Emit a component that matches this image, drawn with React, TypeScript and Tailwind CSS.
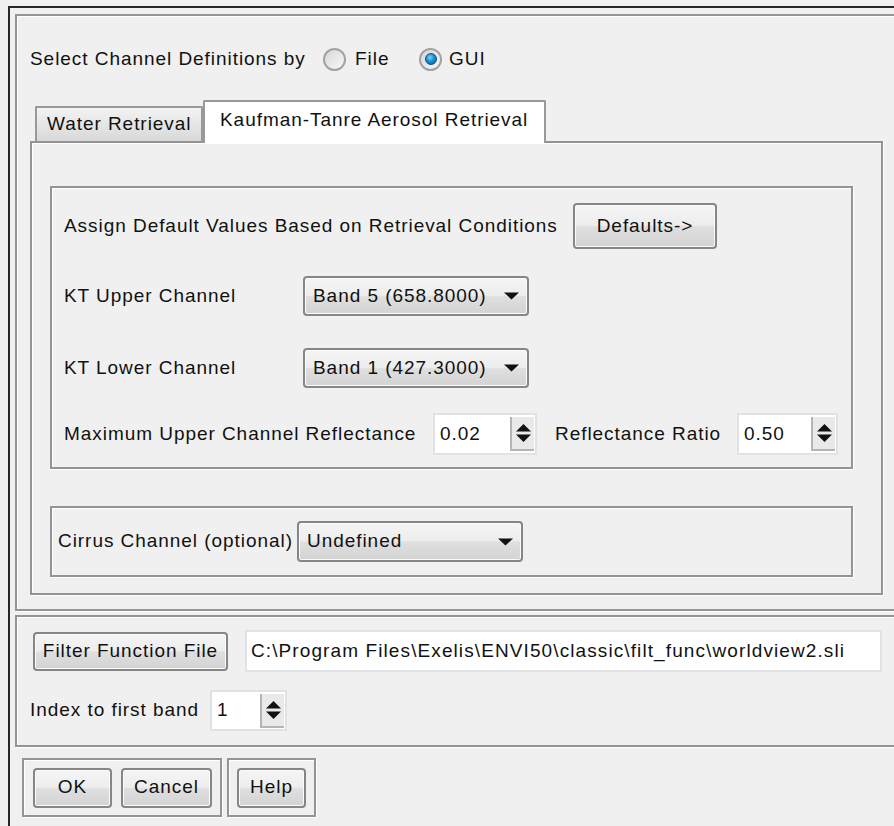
import React from "react";

const BTN =
  "flex shrink-0 items-center justify-center rounded-[4px] border-2 border-[#868686] bg-[linear-gradient(180deg,#f5f5f5_0%,#ededed_48%,#dfdfdf_52%,#d3d3d3_100%)] shadow-[inset_0_0_0_1px_#fbfbfb]";

const COMBO =
  "flex shrink-0 items-center justify-between rounded-[4px] border-2 border-[#868686] bg-[linear-gradient(180deg,#f5f5f5_0%,#ededed_48%,#dfdfdf_52%,#d3d3d3_100%)] shadow-[inset_0_0_0_1px_#fbfbfb] pl-[8px] pr-[8px]";

const FRAME = "border-2 border-[#949494] shadow-[inset_1px_1px_0_#ffffff,1px_1px_0_#ffffff]";

function DropArrow() {
  return (
    <svg width="15" height="8" viewBox="0 0 15 8" className="shrink-0">
      <path d="M0 0.5H15L7.5 7.5Z" fill="#111" />
    </svg>
  );
}

function SpinArrows() {
  return (
    <svg width="17" height="22" viewBox="0 0 17 22">
      <path d="M1 9.5L8.5 2L16 9.5Z" fill="#111" />
      <path d="M1 12.5H16L8.5 20Z" fill="#111" />
    </svg>
  );
}

function Combo({ value, className }: { value: string; className: string }) {
  return (
    <div className={`${COMBO} ${className}`}>
      <span className="whitespace-nowrap">{value}</span>
      <DropArrow />
    </div>
  );
}

function Spin({ value, className }: { value: string; className: string }) {
  return (
    <div className={`flex shrink-0 items-center justify-between border-2 border-[#dfe2e6] bg-white pl-[5px] ${className}`}>
      <span className="whitespace-nowrap">{value}</span>
      <div className="mr-[1px] flex h-[34px] w-[24px] items-center justify-center border-l-2 border-b-2 border-[#b4b4b4] bg-[#e9e9e9]">
        <SpinArrows />
      </div>
    </div>
  );
}

function Radio({ checked }: { checked?: boolean }) {
  return (
    <span className="flex h-[23px] w-[23px] shrink-0 items-center justify-center rounded-full border-2 border-[#a2a2a2] bg-[linear-gradient(135deg,#d6d6d6,#f9f9f9)]">
      {checked && (
        <span className="h-[12px] w-[12px] rounded-full border border-[#0b4f86] bg-[radial-gradient(circle_at_40%_35%,#7fd3f7_0%,#1c8fd0_45%,#0a5a9c_100%)]" />
      )}
    </span>
  );
}

export default function App() {
  return (
    <div className="h-[826px] w-[894px] overflow-hidden bg-[#f0f0f0] font-['Liberation_Sans',Arial,sans-serif] text-[19px] leading-normal tracking-[0.95px] text-[#111]">
      <div className="ml-[8px] mt-[6px] h-[820px] w-[900px] border-l-2 border-t-2 border-[#262626] pl-[5px] pt-[6px]">
        {/* channel definitions and tabbed settings */}
        <div className={`w-[900px] pb-[14px] pl-[13px] pt-[31px] ${FRAME}`}>
          <div className="flex h-[24px] items-center">
            <span className="w-[293px] shrink-0 whitespace-nowrap">Select Channel Definitions by</span>
            <Radio />
            <span className="w-[73px] shrink-0 pl-[9px]">File</span>
            <Radio checked />
            <span className="pl-[7px]">GUI</span>
          </div>

          <div className="mt-[29px] w-[853px]">
            <div className="flex h-[41px] items-end pl-[5px]">
              <div className="flex h-[35px] w-[168px] items-center rounded-t-[2px] border-2 border-b-0 border-[#999999] bg-[linear-gradient(180deg,#f3f3f3_0%,#e6e6e6_50%,#d8d8d8_100%)] pl-[10px] whitespace-nowrap">
                Water Retrieval
              </div>
              <div className="relative z-10 -mb-[2px] flex h-[43px] w-[343px] items-center rounded-t-[2px] border-2 border-b-0 border-[#999999] bg-white pb-[4px] pl-[15px] whitespace-nowrap">
                Kaufman-Tanre Aerosol Retrieval
              </div>
            </div>

            <div className={`h-[454px] pl-[18px] pt-[43px] ${FRAME}`}>
              <div className={`h-[283px] w-[803px] pl-[12px] pt-[15px] ${FRAME}`}>
                <div className="flex h-[46px] items-center">
                  <span className="w-[509px] shrink-0 whitespace-nowrap">
                    Assign Default Values Based on Retrieval Conditions
                  </span>
                  <div className={`${BTN} h-[46px] w-[144px]`}>Defaults-&gt;</div>
                </div>
                <div className="mt-[27px] flex h-[40px] items-center">
                  <span className="w-[239px] shrink-0">KT Upper Channel</span>
                  <Combo value="Band 5 (658.8000)" className="h-[40px] w-[226px]" />
                </div>
                <div className="mt-[32px] flex h-[40px] items-center">
                  <span className="w-[239px] shrink-0">KT Lower Channel</span>
                  <Combo value="Band 1 (427.3000)" className="h-[40px] w-[226px]" />
                </div>
                <div className="mt-[25px] flex h-[42px] items-center">
                  <span className="w-[369px] shrink-0 whitespace-nowrap">Maximum Upper Channel Reflectance</span>
                  <Spin value="0.02" className="h-[42px] w-[104px]" />
                  <span className="ml-[18px] w-[182px] shrink-0 whitespace-nowrap">Reflectance Ratio</span>
                  <Spin value="0.50" className="h-[42px] w-[101px]" />
                </div>
              </div>

              <div className={`mt-[37px] flex h-[71px] w-[803px] items-center pl-[6px] ${FRAME}`}>
                <span className="w-[239px] shrink-0 whitespace-nowrap">Cirrus Channel (optional)</span>
                <Combo value="Undefined" className="h-[41px] w-[226px]" />
              </div>
            </div>
          </div>
        </div>

        {/* filter function */}
        <div className={`mt-[4px] h-[132px] w-[900px] pt-[13px] ${FRAME}`}>
          <div className="flex h-[42px] items-center pl-[16px]">
            <div className={`${BTN} h-[39px] w-[195px] whitespace-nowrap`}>Filter Function File</div>
            <div className="ml-[17px] flex h-[42px] w-[637px] items-center border-2 border-[#dfe2e6] bg-white pl-[4px] whitespace-nowrap tracking-[1.1px]">
              C:\Program Files\Exelis\ENVI50\classic\filt_func\worldview2.sli
            </div>
          </div>
          <div className="mt-[18px] flex h-[41px] items-center pl-[13px]">
            <span className="w-[180px] shrink-0 whitespace-nowrap">Index to first band</span>
            <Spin value="1" className="h-[41px] w-[77px]" />
          </div>
        </div>

        {/* dialog buttons */}
        <div className="ml-[7px] mt-[11px] flex gap-[5px]">
          <div className={`flex h-[59px] w-[200px] items-center pl-[9px] ${FRAME}`}>
            <div className={`${BTN} h-[40px] w-[79px]`}>OK</div>
            <div className={`${BTN} ml-[9px] h-[40px] w-[91px]`}>Cancel</div>
          </div>
          <div className={`flex h-[59px] w-[89px] items-center pl-[8px] ${FRAME}`}>
            <div className={`${BTN} h-[40px] w-[69px]`}>Help</div>
          </div>
        </div>
      </div>
    </div>
  );
}
